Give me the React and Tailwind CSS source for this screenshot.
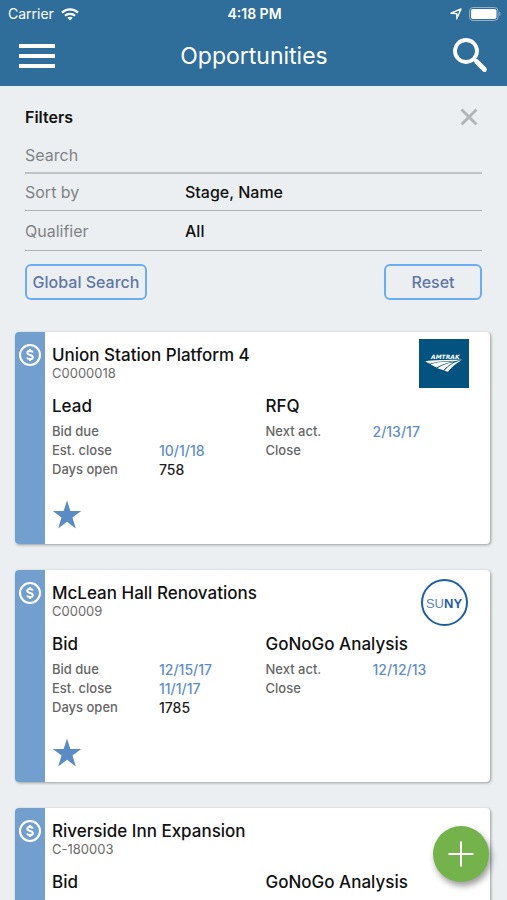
import { useState } from 'react';

const opportunities = [
  {
    id: 'C0000018',
    name: 'Union Station Platform 4',
    logo: 'amtrak',
    stage: 'Lead',
    bidDue: '',
    estClose: '10/1/18',
    daysOpen: '758',
    action: 'RFQ',
    nextAct: '2/13/17',
    close: '',
  },
  {
    id: 'C00009',
    name: 'McLean Hall Renovations',
    logo: 'suny',
    stage: 'Bid',
    bidDue: '12/15/17',
    estClose: '11/1/17',
    daysOpen: '1785',
    action: 'GoNoGo Analysis',
    nextAct: '12/12/13',
    close: '',
  },
  {
    id: 'C-180003',
    name: 'Riverside Inn Expansion',
    logo: null,
    stage: 'Bid',
    bidDue: '',
    estClose: '',
    daysOpen: '',
    action: 'GoNoGo Analysis',
    nextAct: '',
    close: '',
  },
];

const WifiIcon = () => (
  <svg viewBox="0 0 18 13" className="w-[18px] h-[13px]" fill="none" stroke="white" strokeWidth="2.2">
    <path d="M1 4.6C5.4 0.3 12.6 0.3 17 4.6" />
    <path d="M4 7.8C6.8 5.1 11.2 5.1 14 7.8" />
    <path d="M9 12.6L6.3 9.8C7.8 8.4 10.2 8.4 11.7 9.8Z" fill="white" stroke="none" />
  </svg>
);

const LocationIcon = () => (
  <svg viewBox="0 0 12 12" className="w-3 h-3" fill="none" stroke="white" strokeWidth="1.4" strokeLinejoin="round">
    <path d="M11 1L6.8 10.8V5.6L1 5.2Z" />
  </svg>
);

const BatteryIcon = () => (
  <svg viewBox="0 0 32 14" className="w-8 h-[14px]">
    <rect x="0.5" y="0.5" width="28.5" height="13" rx="3.5" fill="none" stroke="#8fb2cc" />
    <rect x="2" y="2" width="25.5" height="10" rx="2" fill="white" />
    <path d="M30.3 4.8C31.9 5.4 31.9 8.6 30.3 9.2Z" fill="#8fb2cc" />
  </svg>
);

const DollarIcon = () => (
  <svg viewBox="0 0 24 24" className="w-6 h-6" fill="none" stroke="white">
    <circle cx="12" cy="12" r="10" strokeWidth="2" />
    <path d="M14.8 9.5C14.4 8.4 13.4 7.9 12 7.9C10.4 7.9 9.3 8.6 9.3 9.8C9.3 12.7 14.8 11.3 14.8 14.2C14.8 15.4 13.7 16.1 12 16.1C10.5 16.1 9.4 15.6 9 14.5" strokeWidth="2" />
    <path d="M12 6V8M12 16V18" strokeWidth="2.2" />
  </svg>
);

const AmtrakLogo = () => (
  <svg viewBox="0 0 50 49" className="w-[50px] h-[49px]" role="img" aria-label="Amtrak">
    <rect width="50" height="49" fill="#03527f" />
    <text x="12" y="20" fontFamily="DejaVu Sans, sans-serif" fontSize="6" fontWeight="bold" fontStyle="italic" fill="white">
      AMTRAK
    </text>
    <g fill="white">
      <path d="M6.2 22.4C13 20.4 30 21.2 43.6 20.4C39 21.6 36 22 33.5 22.5C27 21.8 17 22.2 11 24.8Z" />
      <path d="M11.6 25.4C17 22.8 26 22.4 32 23C27.5 24 21.5 26 17.6 28.6Z" />
      <path d="M18.4 29.2C22.4 26.2 28.6 24 34.4 23.2C31 25.4 27 28 24.6 31.2Z" />
      <path d="M25.4 31.8C28.5 27.4 35 22.6 42.6 21.2C37 24.2 32 28.6 29 32.8Z" />
    </g>
  </svg>
);

const SunyLogo = () => (
  <svg viewBox="0 0 50 50" className="w-[50px] h-[50px]" role="img" aria-label="SUNY">
    <circle cx="25.5" cy="25.5" r="22.5" fill="white" stroke="#1f5da3" strokeWidth="2" />
    <text x="25" y="30.5" textAnchor="middle" fontFamily="Liberation Sans, sans-serif" fontSize="13" fill="#1f5da3">
      <tspan fill="#5b86b8">SU</tspan>
      <tspan fontWeight="700">NY</tspan>
    </text>
  </svg>
);

const StarIcon = () => (
  <svg viewBox="0 0 30 30" className="w-[30px] h-[30px]" fill="#5a8bc4">
    <path d="M15 0.5L18.4 11H29.2L20.5 17.6L23.8 28.5L15 21.8L6.2 28.5L9.5 17.6L0.8 11H11.6Z" />
  </svg>
);

const Field = ({ label, value, dark }) => (
  <div className="flex h-[19px]">
    <dt className="w-[107px] text-[13px] text-[#666]">{label}</dt>
    <dd className={dark ? 'text-sm leading-[19px] text-[#1c1c1c]' : 'text-sm leading-[19px] text-[#5f8dc8]'}>{value}</dd>
  </div>
);

const OpportunityCard = ({ item }) => (
  <article className="flex rounded bg-white overflow-hidden shadow-[1px_1px_3px_rgba(0,0,0,0.35)]">
    <div className="w-[30px] shrink-0 bg-[#739fcf] flex justify-center pt-[11px]">
      <DollarIcon />
    </div>
    <div className="flex-1 min-w-0 pt-[7px] pb-[14px] pl-[7px] pr-[21px]">
      <div className="flex justify-between h-[50px]">
        <div className="pt-[5px]">
          <h2 className="text-[17px] leading-[22px] font-medium text-[#111]">{item.name}</h2>
          <p className="text-[13px] leading-[14px] text-[#6b6b6b]">{item.id}</p>
        </div>
        {item.logo === 'amtrak' && <AmtrakLogo />}
        {item.logo === 'suny' && <SunyLogo />}
      </div>
      <div className="grid grid-cols-2 mt-[5px] leading-[19px] font-medium">
        <section>
          <h3 className="text-[17px] leading-6 mb-1 text-[#111]">{item.stage}</h3>
          <dl>
            <Field label="Bid due" value={item.bidDue} />
            <Field label="Est. close" value={item.estClose} />
            <Field label="Days open" value={item.daysOpen} dark />
          </dl>
        </section>
        <section className="pl-[5px]">
          <h3 className="text-[17px] leading-6 mb-1 text-[#111]">{item.action}</h3>
          <dl>
            <Field label="Next act." value={item.nextAct} />
            <Field label="Close" value={item.close} />
          </dl>
        </section>
      </div>
      <button aria-label="Favorite" className="block mt-[21px]">
        <StarIcon />
      </button>
    </div>
  </article>
);

const App = () => {
  const [search, setSearch] = useState('');
  const [sortBy, setSortBy] = useState('Stage, Name');
  const [qualifier, setQualifier] = useState('All');

  // Reset Filters Handler
  const handleReset = () => {
    setSearch('');
    setSortBy('Stage, Name');
    setQualifier('All');
  };

  return (
    <div className="relative h-screen flex flex-col overflow-hidden bg-[#ebeff2] font-[Inter,sans-serif]">
      {/* Header */}
      <header className="shrink-0 pb-[2px] bg-[#2f6d9a] text-white">
        <div className="grid grid-cols-3 items-center h-7 pl-2 pr-[6px] text-sm">
          <div className="flex items-center gap-[7px]">
            <span>Carrier</span>
            <WifiIcon />
          </div>
          <span className="text-center font-semibold">4:18 PM</span>
          <div className="flex items-center justify-end gap-[7px]">
            <LocationIcon />
            <BatteryIcon />
          </div>
        </div>
        <div className="flex items-center justify-between h-14 pl-[19px] pr-[18px]">
          <button aria-label="Menu" className="flex flex-col gap-[6px]">
            <span className="w-9 h-1 bg-white" />
            <span className="w-9 h-1 bg-white" />
            <span className="w-9 h-1 bg-white" />
          </button>
          <h1 className="text-[23px] leading-7">Opportunities</h1>
          <button aria-label="Search opportunities">
            <svg viewBox="0 0 36 36" className="w-9 h-9" fill="none" stroke="white">
              <circle cx="13" cy="13" r="11" strokeWidth="3.8" />
              <path d="M20.5 20.5L23 23" strokeWidth="3" />
              <path d="M23.5 23.5L31.5 31.5" strokeWidth="4.8" strokeLinecap="round" />
            </svg>
          </button>
        </div>
      </header>

      <main className="flex-1 min-h-0 overflow-y-auto [scrollbar-width:none]">
        {/* Filters */}
        <form className="pt-[19px] px-[25px]" onSubmit={(e) => e.preventDefault()}>
          <div className="flex items-center justify-between h-6 mb-2">
            <h2 className="text-base font-semibold text-[#111]">Filters</h2>
            <button type="button" aria-label="Close filters" className="mr-1">
              <svg viewBox="0 0 18 18" className="w-[18px] h-[18px]" stroke="#b3b6b7" strokeWidth="3">
                <path d="M1.5 1.5L16.5 16.5M16.5 1.5L1.5 16.5" />
              </svg>
            </button>
          </div>
          <input
            type="text"
            placeholder="Search"
            aria-label="Search"
            value={search}
            className="block w-full h-[37px] border-b-2 border-[#bec2c3] text-base placeholder:text-[#808384] outline-none"
            onChange={(e) => setSearch(e.target.value)}
          />
          <div className="flex items-center h-[37px] border-b border-[#aeb1b3]">
            <label htmlFor="sortBy" className="w-40 text-base text-[#808384]">Sort by</label>
            <select
              id="sortBy"
              value={sortBy}
              className="flex-1 appearance-none text-base font-medium text-[#111] outline-none"
              onChange={(e) => setSortBy(e.target.value)}
            >
              <option>Stage, Name</option>
            </select>
          </div>
          <div className="flex items-center h-10 border-b border-[#aeb1b3]">
            <label htmlFor="qualifier" className="w-40 text-base text-[#808384]">Qualifier</label>
            <select
              id="qualifier"
              value={qualifier}
              className="flex-1 appearance-none text-base font-medium text-[#111] outline-none"
              onChange={(e) => setQualifier(e.target.value)}
            >
              <option>All</option>
            </select>
          </div>
          <div className="flex justify-between mt-[13px] text-base font-medium text-[#5f76a6]">
            <button type="submit" className="h-9 w-[122px] border-2 border-[#6cacf0] rounded-md whitespace-nowrap">
              Global Search
            </button>
            <button type="button" onClick={handleReset} className="h-9 w-[98px] border-2 border-[#6cacf0] rounded-md">
              Reset
            </button>
          </div>
        </form>

        {/* List Opportunities */}
        <div className="flex flex-col gap-[26px] pt-8 pb-6 pl-[15px] pr-[17px]">
          {opportunities.map((item) => (
            <OpportunityCard key={item.id} item={item} />
          ))}
        </div>
      </main>

      {/* Add Button */}
      <button
        aria-label="Add opportunity"
        className="absolute right-[18px] bottom-[18px] w-14 h-14 rounded-full bg-[#74b34c] flex items-center justify-center shadow-[2px_4px_6px_rgba(0,0,0,0.4)]"
      >
        <svg viewBox="0 0 26 26" className="w-[26px] h-[26px]" stroke="white" strokeWidth="2">
          <path d="M13 0.5V25.5M0.5 13H25.5" />
        </svg>
      </button>
    </div>
  );
};

export default App;
